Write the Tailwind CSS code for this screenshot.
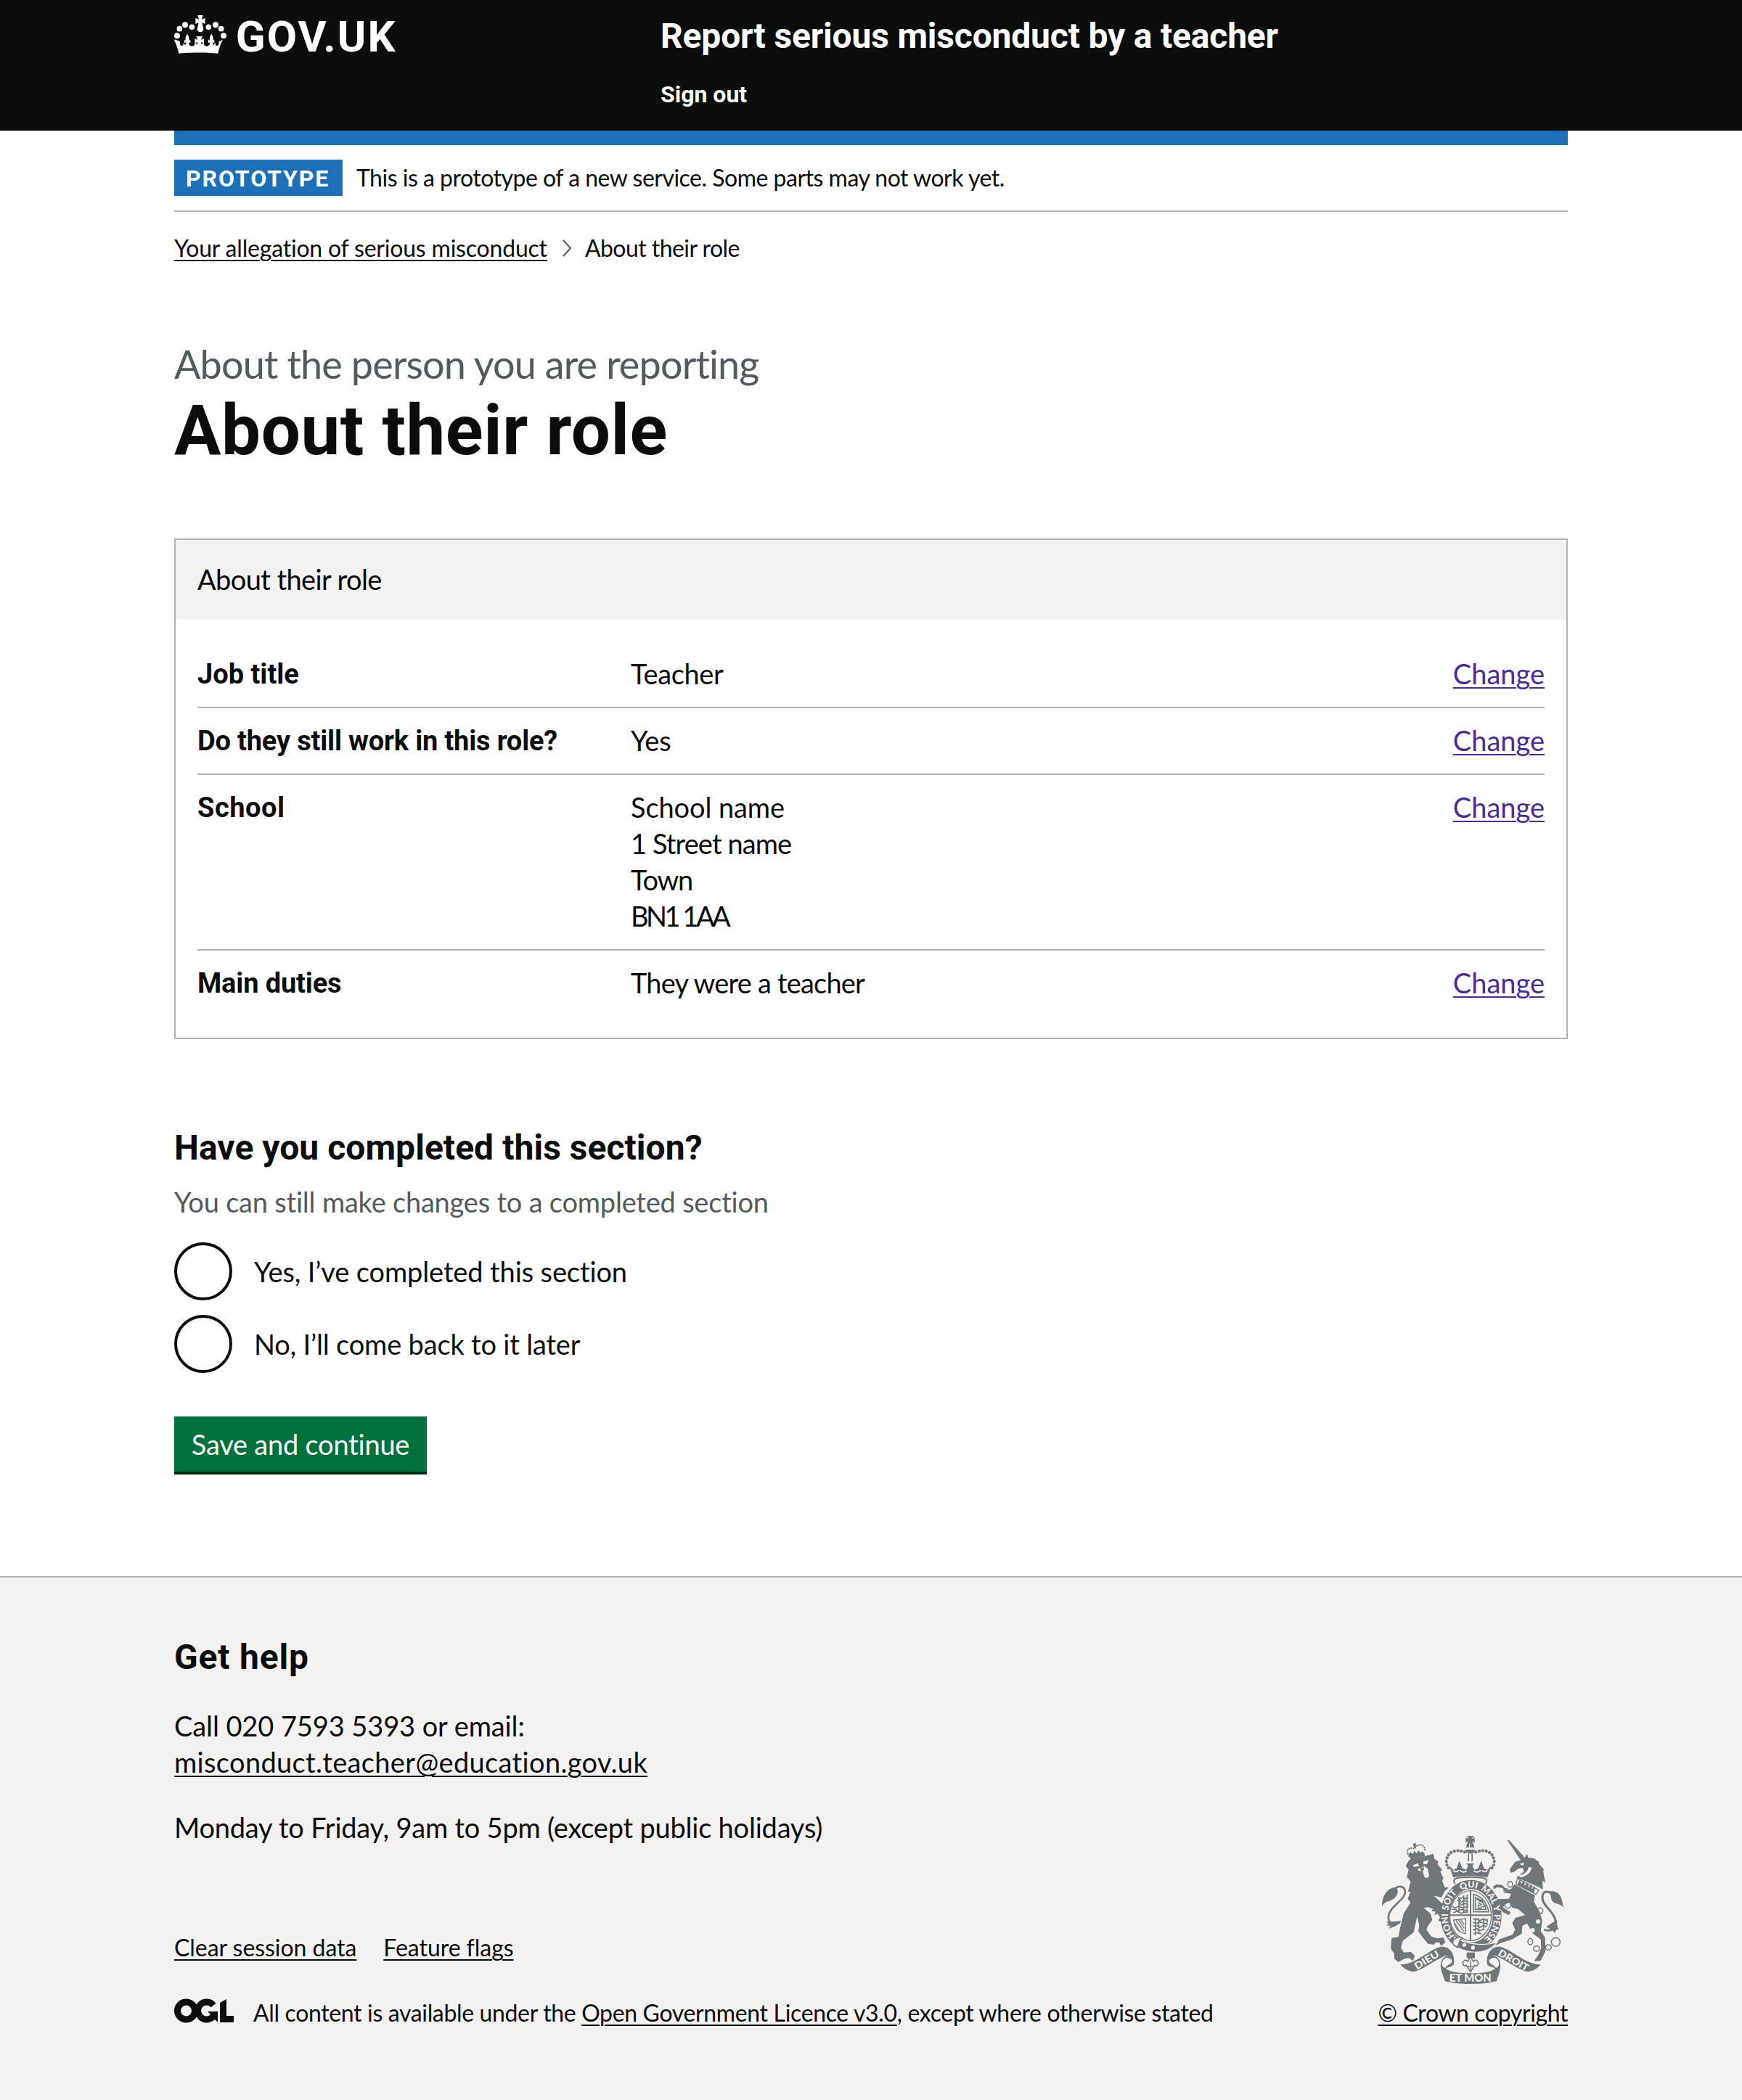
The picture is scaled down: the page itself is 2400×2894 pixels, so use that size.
<!DOCTYPE html>
<html lang="en">
<head>
<meta charset="utf-8">
<title>About their role - Report serious misconduct by a teacher</title>
<script src="https://cdn.jsdelivr.net/npm/@tailwindcss/browser@4"></script>
</head>
<body class="bg-white font-['Lato',sans-serif] text-[38px] leading-[50px] text-[#0b0c0c]">

<header class="h-[180px] bg-[#0b0c0c] text-white">
  <div class="mx-auto flex w-[1920px]">
    <div class="w-[670px] pt-[21px]">
      <svg class="h-[53px] w-[307px] overflow-visible" viewBox="30 33 921 159" fill="#fff" role="img" aria-label="GOV.UK">
        <g>
          <circle cx="42" cy="118" r="12"/><circle cx="52" cy="89" r="11.5"/><circle cx="75" cy="73" r="12"/><circle cx="103" cy="82" r="11.5"/>
          <circle cx="234" cy="118" r="12"/><circle cx="224" cy="89" r="11.5"/><circle cx="201" cy="73" r="12"/><circle cx="172" cy="82" r="11.5"/>
          <path d="M127 33h22l-6 17 15-5v24l-13-6 6 27a13 13 0 1 1-26 0l6-27-13 6V45l15 5z"/>
          <path d="M37 134l17 8c-2 8 0 16 7 17 6 0 8-6 6-12 4 2 6 5 7 9 4-2 6-6 5-11l-7 3v-14l6 3c-4-9 0-17 6-27 6 10 10 18 6 27l7-3v14l-7-3c0 8 4 16 13 16 8 0 13-5 12-13 5 1 7 3 10 7l2-11-12 5v-20l12 6-6-15h26l-6 15 12-6v20l-12-5 2 11c3-4 5-6 10-7-1 8 4 13 12 13 9 0 13-8 13-16l-7 3v-14l7 3c-4-9 0-17 6-27 6 10 10 18 6 27l6-3v14l-7-3c-1 5 1 9 5 11 1-4 3-7 7-9-2 6 0 12 6 12 7-1 9-9 7-17l17-8c-9 16-15 34-20 57-47-5-115-5-162 0-5-23-11-41-20-57z"/>
        </g>
        <text x="284" y="183" font-family="Roboto, sans-serif" font-weight="700" font-size="180" textLength="660">GOV.UK</text>
      </svg>
    </div>
    <div class="flex flex-col gap-[30px] pt-5 font-['Roboto',sans-serif] font-bold">
      <div class="text-[48px] leading-[60px] tracking-[-0.18px]">Report serious misconduct by a teacher</div>
      <a class="text-[32px] leading-10">Sign out</a>
    </div>
  </div>
</header>

<div class="mx-auto w-[1920px]">
  <div class="h-5 bg-[#1d70b8]"></div>
  <div class="flex h-[92px] items-start gap-[19px] border-b-2 border-[#b1b4b6] pt-5 text-[32px]">
    <strong class="h-[50px] w-[232px] bg-[#1d70b8] pl-4 font-['Roboto',sans-serif] leading-[52px] font-bold tracking-[1.9px] text-white">PROTOTYPE</strong>
    <span class="leading-[49px] tracking-[-0.5px]">This is a prototype of a new service. Some parts may not work yet.</span>
  </div>
  <nav class="mt-[30px] flex text-[32px] leading-10">
    <a class="tracking-[-0.2px] underline decoration-2 underline-offset-4">Your allegation of serious misconduct</a>
    <svg class="mt-[8px] ml-5 h-6 w-[14px]" viewBox="0 0 14 24" fill="none" stroke="#505a5f" stroke-width="2"><path d="M2 1l10 11L2 23"/></svg>
    <span class="ml-[18px] tracking-[-0.55px]">About their role</span>
  </nav>

  <main>
    <div class="mt-[110px] text-[54px] leading-[60px] tracking-[-0.86px] text-[#505a5f]">About the person you are reporting</div>
    <h1 class="mt-[11px] font-['Roboto',sans-serif] text-[96px] leading-[100px] font-bold tracking-[0.6px]">About their role</h1>

    <section class="mt-[99px] border-2 border-[#b1b4b6]">
      <h2 class="h-[110px] bg-[#f3f2f1] px-[30px] pt-[29px] tracking-[-0.6px] text-black">About their role</h2>
      <dl class="p-[30px]">
        <div class="flex border-b-2 border-[#b1b4b6]">
          <dt class="w-[597px] py-5 font-['Roboto',sans-serif] font-bold">Job title</dt>
          <dd class="flex-1 pt-[19px] pb-[21px] tracking-[-0.35px]">Teacher</dd>
          <dd class="pt-[19px] pb-[21px]"><a class="text-[#4c2c92] underline decoration-2 underline-offset-4">Change</a></dd>
        </div>
        <div class="flex border-b-2 border-[#b1b4b6]">
          <dt class="w-[597px] py-5 font-['Roboto',sans-serif] font-bold tracking-[-0.18px]">Do they still work in this role?</dt>
          <dd class="flex-1 pt-[19px] pb-[21px] tracking-[-0.2px]">Yes</dd>
          <dd class="pt-[19px] pb-[21px]"><a class="text-[#4c2c92] underline decoration-2 underline-offset-4">Change</a></dd>
        </div>
        <div class="flex border-b-2 border-[#b1b4b6]">
          <dt class="w-[597px] py-5 font-['Roboto',sans-serif] font-bold tracking-[0.5px]">School</dt>
          <dd class="flex-1 pt-[19px] pb-[21px]"><span class="tracking-[-0.1px]">School name</span><br><span class="tracking-[-0.9px]">1 Street name</span><br><span class="tracking-[-1.28px]">Town</span><br><span class="tracking-[-3.5px]">BN1 1AA</span></dd>
          <dd class="pt-[19px] pb-[21px]"><a class="text-[#4c2c92] underline decoration-2 underline-offset-4">Change</a></dd>
        </div>
        <div class="flex">
          <dt class="w-[597px] py-5 font-['Roboto',sans-serif] font-bold tracking-[-0.15px]">Main duties</dt>
          <dd class="flex-1 pt-[19px] pb-[21px] tracking-[-0.8px]">They were a teacher</dd>
          <dd class="pt-[19px] pb-[21px]"><a class="text-[#4c2c92] underline decoration-2 underline-offset-4">Change</a></dd>
        </div>
      </dl>
    </section>

    <form>
      <h2 class="mt-[120px] font-['Roboto',sans-serif] text-[48px] leading-[60px] font-bold tracking-[0.05px]">Have you completed this section?</h2>
      <div class="mt-[19px] tracking-[-0.21px] text-[#505a5f]">You can still make changes to a completed section</div>
      <div class="mt-[31px] flex flex-col gap-5 leading-20">
        <label class="flex gap-[30px]"><span class="size-20 rounded-full border-4 border-[#0b0c0c]"></span><span class="tracking-[-0.12px]">Yes, I’ve completed this section</span></label>
        <label class="flex gap-[30px]"><span class="size-20 rounded-full border-4 border-[#0b0c0c]"></span><span class="tracking-[-0.18px]">No, I’ll come back to it later</span></label>
      </div>
      <button type="button" class="mt-[60px] block h-20 w-[348px] border-b-4 border-[#002d18] bg-[#00703c] leading-[76px] tracking-[-0.23px] text-white">Save and continue</button>
    </form>
  </main>
</div>

<footer class="mt-[140px] h-[722px] border-t-2 border-[#b1b4b6] bg-[#f3f2f1] pt-20">
  <div class="mx-auto flex w-[1920px] items-end justify-between">
    <div>
      <h2 class="font-['Roboto',sans-serif] text-[48px] leading-[60px] font-bold tracking-[0.8px]">Get help</h2>
      <p class="mt-[39px] tracking-[-0.1px]">Call 020 7593 5393 or email:<br><a class="tracking-[0.34px] underline decoration-2 underline-offset-4">misconduct.teacher@education.gov.uk</a></p>
      <p class="mt-10 tracking-[-0.22px]">Monday to Friday, 9am to 5pm (except public holidays)</p>
      <div class="mt-[121px] flex gap-[37px] text-[32px] leading-10 tracking-[-0.05px]">
        <a class="underline decoration-2 underline-offset-4">Clear session data</a>
        <a class="underline decoration-2 underline-offset-4">Feature flags</a>
      </div>
      <div class="mt-[50px] flex text-[32px] leading-10">
        <svg class="h-[34px] w-[82px] overflow-visible" viewBox="0 0 82 34" fill="#0b0c0c" role="img" aria-label="OGL">
          <circle cx="16.5" cy="17" r="12" fill="none" stroke="#0b0c0c" stroke-width="9"/>
          <path d="M54 9.5A12 12 0 1 0 54 24.500" fill="none" stroke="#0b0c0c" stroke-width="9"/>
          <path d="M46 18h14v15l-4-4-8 3-2-6 5-3z"/>
          <path d="M63 6l9-5v23h10v9H63z"/>
        </svg>
        <span class="ml-[27px] tracking-[-0.35px]">All content is available under the <a class="underline decoration-2 underline-offset-4">Open Government Licence v3.0</a>, except where otherwise stated</span>
      </div>
    </div>
    <div class="flex flex-col items-end gap-5">
      <svg class="mr-[6px] h-[204px] w-[250px]" viewBox="72 90 750 612" fill="#6f777b" role="img" aria-label="Royal coat of arms">
        <defs>
          <path id="motto" d="M440 536A96 116 0 0 1 440 304A96 116 0 0 1 440 536"/>
        </defs>
        <!-- lion -->
        <path d="M170 214L184 190 270 168 284 164 289 185 306 197 301 206 321 232 313 238 326 265 321 276 331 303 348 303 330 320 318 345 290 338 318 366 345 390 350 425 342 448 326 436 322 448 305 440 312 426 302 412 288 418 294 404 276 400 284 392 262 385 244 388 272 410 280 438 262 462 256 478 276 506 300 514 326 510 334 530 316 545 310 532 294 530 288 540 262 536 240 510 222 484 226 460 217 424 203 488 158 524 150 552 162 572 192 570 208 586 200 606 182 594 160 600 142 612 124 600 122 575 108 556 112 512 140 508 148 466 162 410 190 366 178 350 190 322 180 320 190 280 178 262 172 270 182 230z"/>
        <path d="M197 212l24-9 4 12-18 3zM243 196l22-6-7 16-14 2zM222 226l26-10 13 10 6 30-8 9-11-3-8-26-18-2z" fill="#f3f2f1"/>
        <path d="M228 224l18-4-2 14-8 4z"/>
        <path d="M290 338l30 28 26 26" fill="none" stroke="#f3f2f1" stroke-width="4"/>
        <path d="M184 174l62-16 4 14-58 18z"/>
        <path d="M182 168l8-12 8 10 8-14 8 10 10-12 6 10 10-6 4 12-54 14z"/>
        <g fill="none" stroke="#6f777b" stroke-width="7" stroke-linecap="round" stroke-dasharray="0 9"><path d="M184 174C168 150 180 136 206 142C218 122 250 118 250 154"/></g>
        <path d="M200 122l12-3 1 22-7 2z"/>
        <path d="M146 448C112 466 94 446 100 416C108 378 168 356 168 320C164 294 138 294 118 314" fill="none" stroke="#6f777b" stroke-width="8"/>
        <path d="M72 382C72 340 92 302 132 303C150 334 114 360 96 361C86 364 78 370 72 382zM88 446L152 442C142 458 130 464 100 474L108 462 90 460 100 452z"/>
        <!-- unicorn -->
        <path d="M588 105L600 110 664 182 646 192z"/>
        <path d="M646 190L662 180 672 164 676 180 702 184 724 200 718 202 742 230 738 234 747 284 735 276 737 312 716 300 628 262 660 236 652 222 636 226 616 240 604 242 600 228 622 198z"/>
        <path d="M690 220c-2 22-18 36-44 42l-12-8c26-4 40-14 44-34zM640 206l18-5-2 12z" fill="#f3f2f1"/>
        <path d="M632 266L720 314 708 332 626 288z" fill="#f3f2f1" stroke="#6f777b" stroke-width="4"/>
        <path d="M634 284l8-14 6 18 12-14 2 22 14-14 0 22 14-14 2 20 14-12-6 30-70-34z"/>
        <path d="M620 290L704 336 700 362 724 404 734 440 728 484 746 510 748 566 728 606 700 608 716 586 730 556 728 518 696 494 672 452 652 462 650 494 610 518 570 530 540 543 556 518 612 498 622 478 610 450 624 428 664 418 636 394 610 386 600 366 582 372 572 386 604 406 596 418 572 406 550 376 545 352 596 350 606 330 588 326 570 306 548 302 534 312 532 298 546 290 570 294 588 314 606 310z"/>
        <path d="M742 478C784 490 800 460 786 430C772 392 726 372 736 334C744 314 764 320 782 334" fill="none" stroke="#6f777b" stroke-width="9"/>
        <path d="M762 320C804 312 816 342 822 386C804 364 772 378 770 340zM750 466L790 440 803 480 794 476 786 492 778 480z"/>
        <g fill="none" stroke="#6f777b" stroke-width="4.500"><ellipse cx="602" cy="290" rx="10" ry="12"/><circle cx="584" cy="316" r="8"/><ellipse cx="592" cy="375" rx="12" ry="14"/><circle cx="725" cy="400" r="12"/><ellipse cx="685" cy="527" rx="10" ry="13"/><ellipse cx="711" cy="556" rx="13" ry="11"/><ellipse cx="760" cy="551" rx="12" ry="11"/><circle cx="790" cy="529" r="18"/></g>
        <g fill="#f3f2f1"><circle cx="717" cy="444" r="9"/><circle cx="695" cy="480" r="9"/></g>
        <!-- crown -->
        <path d="M424 90h27l-8 13 12-7v23l-12-7 7 11 5 18h-37l5-18 7-11-12 7V96l12 7z"/>
        <path d="M434 122v18M419 138h38" stroke="#f3f2f1" stroke-width="3"/>
        <path d="M417 147h40l-4 12-16 6-16-6zM427 164h5v32h-5zM442 164h5v32h-5z"/>
        <g fill="none" stroke="#6f777b" stroke-width="13" stroke-linecap="round" stroke-dasharray="0 14.500"><path d="M414 157C380 144 342 152 338 196Q338 214 352 228"/><path d="M460 157C494 144 532 152 536 196Q536 214 522 228"/></g>
        <path d="M350 212L366 230 380 224 392 193 405 224 420 230 428 214 420 204 454 204 446 214 454 230 469 224 482 193 494 224 508 230 525 212 508 262C470 254 404 254 366 262z"/>
        <path d="M366 232q12 12 24 0M394 232q14 14 28 2M452 234q14 12 28-2M484 232q12 12 24 0" fill="none" stroke="#f3f2f1" stroke-width="5"/>
        <path d="M374 288C356 262 390 261 437 261C484 261 518 262 500 288" fill="none" stroke="#6f777b" stroke-width="6"/>
        <!-- garter and shield -->
        <ellipse cx="440" cy="420" rx="108" ry="129" fill="none" stroke="#6f777b" stroke-width="37"/>
        <ellipse cx="438" cy="420" rx="86" ry="103" fill="#f3f2f1" stroke="#6f777b" stroke-width="4"/>
        <path d="M438 318v204M352 418h172" stroke="#6f777b" stroke-width="6"/>
        <g fill="none" stroke="#6f777b" stroke-width="5">
          <path d="M386 344l12 6 10-8 8 8 12-6M382 356h12l6 8 12-8 16 8M392 366l8 10 10-8 18 6M362 382l14 6 12-8 16 8 24-6M360 394h18l8 8 14-8 28 6M366 408l16-6 16 8 28-6M410 336v74M424 332v78M390 346v60"/>
          <path d="M450 332q48 10 64 72h-64zM458 344q34 12 44 50h-44zM464 352l14 10 8-8 4 16 10 10-16 4-10 8-4-14 12-4-12-8"/>
          <path d="M368 438l50-6v62q-42-2-50-56zM378 440l32 46M388 438l24 34M398 438l14 18M372 450l22 36" stroke-width="4"/>
          <path d="M448 434h18l8 8 14-8 22 6M448 448l16 4 12-6 30 8M448 462h20l10 6 14-8 12 8M448 478l16-4 14 8 14-6M450 494l20-4 12 6M458 430v70M472 430v66M492 430v50M506 432v30"/>
        </g>
        <g font-family="Lato, sans-serif" font-weight="900" font-size="37" fill="#f3f2f1">
          <text><textPath href="#motto" startOffset="11.5%">HONI</textPath></text>
          <text><textPath href="#motto" startOffset="28%">SOIT</textPath></text>
          <text><textPath href="#motto" startOffset="43.5%">QUI</textPath></text>
          <text><textPath href="#motto" startOffset="56%">MAL</textPath></text>
          <text><textPath href="#motto" startOffset="69%">Y</textPath></text>
          <text><textPath href="#motto" startOffset="74%">PENSE</textPath></text>
        </g>
        <path d="M372 508C410 536 490 548 548 530C520 566 476 574 440 570 408 566 384 554 366 542z" stroke="#f3f2f1" stroke-width="4"/>
        <path d="M368 540C352 524 390 498 404 512C390 520 392 534 384 552z" fill="#f3f2f1" stroke="#6f777b" stroke-width="5"/>
        <circle cx="412" cy="541" r="8" fill="#f3f2f1"/><circle cx="448" cy="552" r="8" fill="#f3f2f1"/>
        <!-- pendant -->
        <path d="M422 572h34v24h-34z"/>
        <path d="M438 590l12 20c8-14 24 0 18 14q-6 6-12 0l-10 16-8 12-8-12-10-16q-6 6-12 0c-6-14 10-28 18-14z" fill="#f3f2f1" stroke="#6f777b" stroke-width="5"/>
        <path d="M438 604v40M426 630h24" stroke="#6f777b" stroke-width="4"/>
        <!-- scroll -->
        <path d="M148 622C210 622 258 566 312 549C352 544 372 578 370 612C372 632 338 640 322 630C316 610 318 590 346 586C330 576 250 640 206 651C178 652 160 636 148 622z"/>
        <path d="M320 632C312 596 338 582 362 600C372 622 340 622 334 640z" fill="#f3f2f1" stroke="#6f777b" stroke-width="5"/>
        <path d="M728 622C666 622 618 566 564 549C524 544 504 578 506 612C504 632 538 640 554 630C560 610 558 590 530 586C546 576 626 640 670 651C698 652 716 636 728 622z"/>
        <path d="M556 632C564 596 538 582 514 600C504 622 536 622 542 640z" fill="#f3f2f1" stroke="#6f777b" stroke-width="5"/>
        <path d="M314 622C340 652 380 658 438 658C496 658 536 652 562 622C560 656 552 668 546 690C500 706 376 706 332 690C326 668 316 656 314 622z"/>
        <g font-family="Lato, sans-serif" font-weight="900" font-size="43" fill="#f3f2f1">
          <text x="350" y="693" textLength="174" lengthAdjust="spacingAndGlyphs">ET MON</text>
          <text transform="translate(216 644) rotate(-31)" textLength="112" lengthAdjust="spacingAndGlyphs" font-size="40">DIEU</text>
          <text transform="translate(549 582) rotate(30)" textLength="138" lengthAdjust="spacingAndGlyphs" font-size="40">DROIT</text>
        </g>
      </svg>
      <a class="text-[32px] leading-10 tracking-[-0.4px] underline decoration-2 underline-offset-4">© Crown copyright</a>
    </div>
  </div>
</footer>
</body>
</html>
